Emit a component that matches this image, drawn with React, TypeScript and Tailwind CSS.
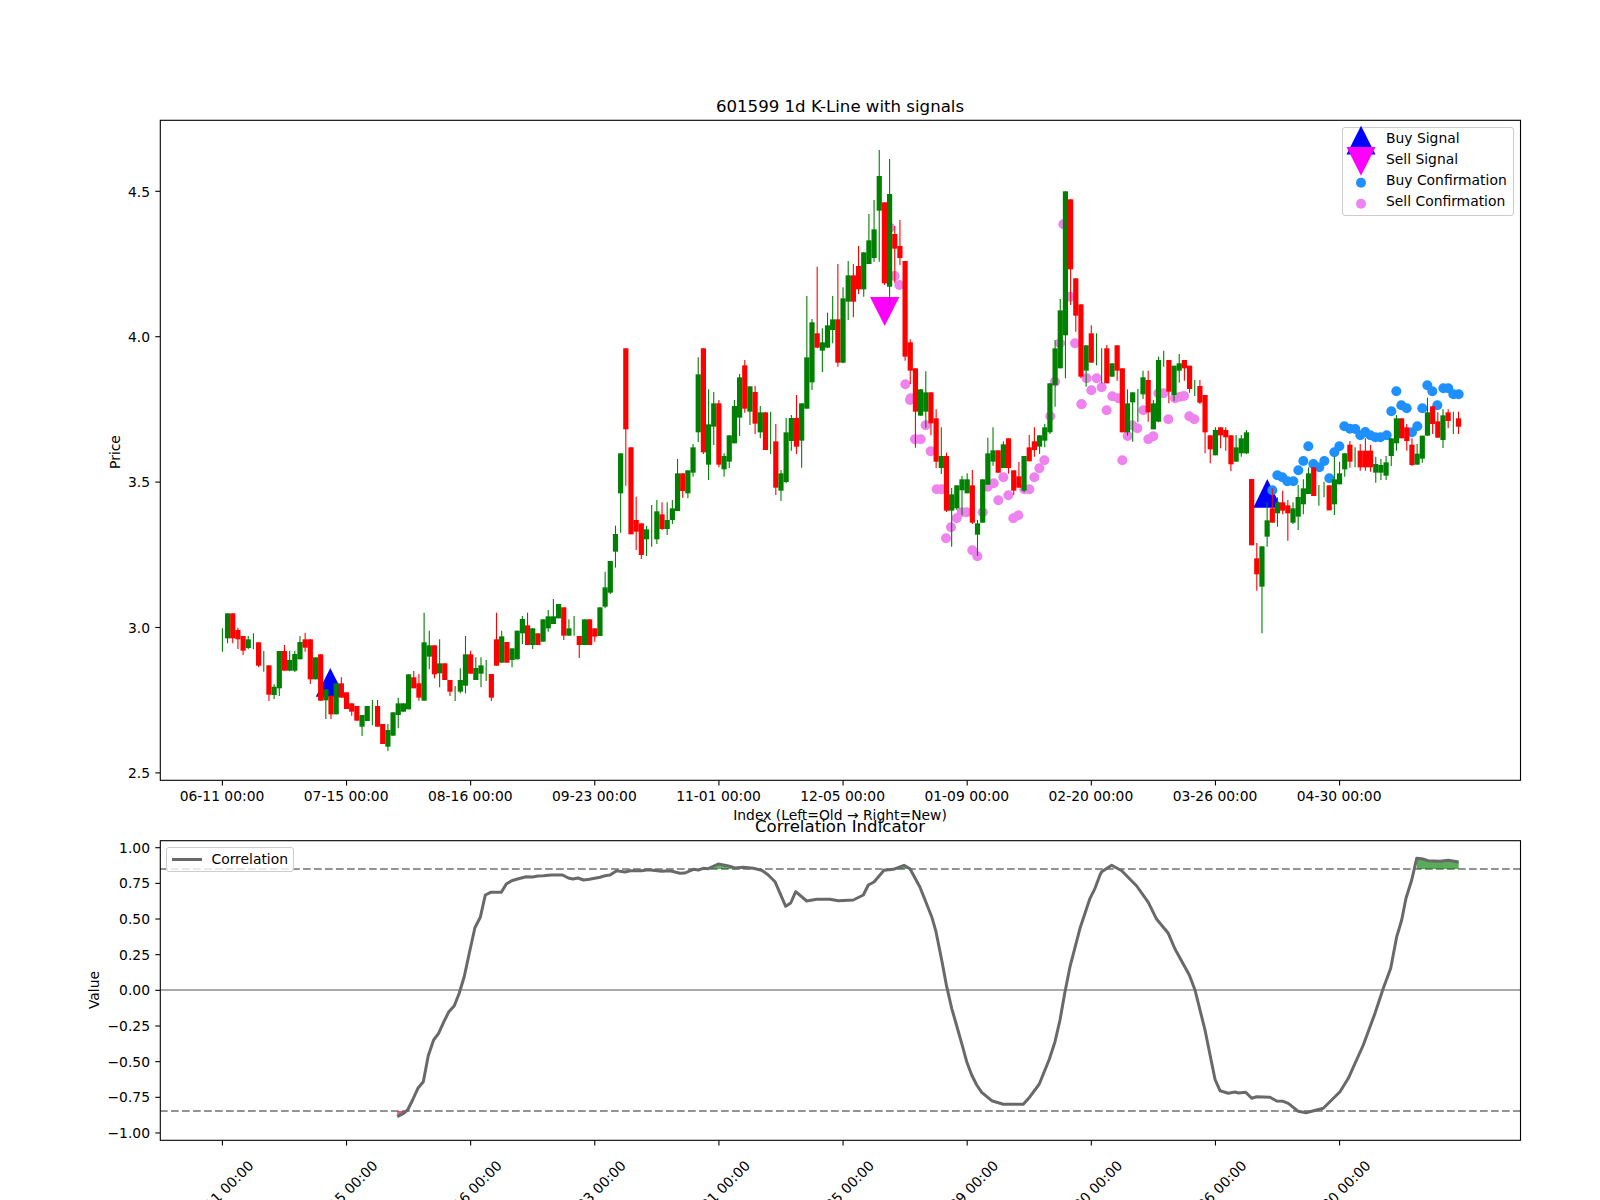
import React from 'react';

type Row = [string, number, number, number, number];

// candles were read off the picture in 3x crop pixels: colour, wick top, body top, body bottom, wick bottom
const seg = (oy: number, rows: Row[]) =>
  rows.map(([c, a, b, d, e]) => ({ c, wt: oy + a / 3, bt: oy + b / 3, bb: oy + d / 3, wb: oy + e / 3 }));

const candles = [
  ...seg(580, [
    ['g', 145, 178, 180, 215], ['g', 100, 100, 175, 190], ['r', 100, 100, 175, 190], ['r', 143, 150, 178, 207],
    ['r', 168, 168, 212, 225], ['g', 168, 178, 204, 208], ['g', 160, 182, 184, 208], ['r', 187, 187, 257, 262],
    ['g', 213, 245, 247, 275], ['r', 256, 256, 344, 363], ['g', 313, 320, 345, 357], ['g', 213, 213, 325, 348],
    ['r', 195, 213, 272, 272], ['g', 212, 240, 272, 274], ['g', 212, 222, 272, 276], ['g', 168, 186, 238, 238],
    ['r', 158, 178, 203, 215], ['r', 178, 178, 298, 312], ['g', 232, 232, 298, 298], ['r', 223, 223, 362, 362],
    ['g', 328, 328, 361, 417], ['r', 347, 347, 403, 417], ['g', 310, 310, 403, 403], ['r', 292, 310, 353, 353],
    ['r', 337, 337, 387, 387], ['r', 370, 370, 395, 407], ['r', 378, 378, 422, 422], ['g', 405, 405, 440, 468],
    ['g', 378, 378, 423, 423], ['g', 360, 396, 398, 436], ['r', 360, 378, 440, 440], ['r', 432, 432, 492, 492],
    ['g', 432, 450, 500, 513], ['g', 397, 397, 467, 467], ['g', 353, 370, 405, 445], ['g', 370, 370, 395, 395],
    ['g', 283, 283, 388, 388], ['r', 273, 292, 325, 325], ['r', 282, 310, 353, 362], ['g', 98, 187, 362, 362],
    ['g', 152, 196, 230, 268], ['r', 196, 196, 283, 295], ['g', 178, 250, 280, 322], ['r', 250, 250, 300, 300],
    ['r', 300, 300, 335, 348], ['g', 318, 340, 342, 363], ['g', 265, 300, 335, 340], ['g', 168, 223, 317, 340],
    ['r', 212, 223, 281, 281], ['g', 232, 264, 300, 300], ['g', 232, 256, 281, 322], ['g', 240, 270, 272, 303],
    ['r', 282, 282, 353, 363], ['r', 98, 178, 257, 257], ['g', 152, 169, 248, 248], ['r', 186, 186, 248, 248],
    ['g', 205, 205, 240, 262], ['g', 152, 152, 238, 238], ['g', 108, 117, 160, 192], ['r', 98, 136, 195, 195],
    ['g', 145, 145, 195, 207], ['r', 160, 160, 195, 195], ['g', 118, 118, 185, 185], ['g', 90, 109, 145, 155],
    ['g', 57, 109, 132, 132], ['g', 72, 72, 115, 115], ['r', 82, 82, 167, 180], ['g', 118, 145, 167, 167],
    ['g', 108, 140, 142, 167], ['r', 168, 168, 195, 234], ['g', 118, 118, 195, 195], ['r', 118, 118, 195, 195],
    ['r', 145, 145, 170, 185], ['g', 82, 82, 168, 168],
  ] as Row[]),
  ...seg(330, [
    ['g', 725, 772, 830, 835], ['g', 693, 693, 788, 792], ['g', 587, 612, 665, 713], ['g', 370, 370, 490, 608],
    ['r', 55, 55, 298, 467], ['r', 352, 352, 613, 613], ['r', 500, 570, 605, 660], ['r', 580, 580, 675, 687],
    ['g', 588, 598, 628, 678], ['g', 525, 585, 587, 650], ['g', 510, 544, 628, 642], ['r', 517, 553, 597, 600],
    ['g', 517, 570, 597, 615], ['g', 510, 535, 570, 582], ['g', 387, 430, 543, 543], ['r', 430, 430, 483, 503],
    ['g', 421, 421, 490, 505], ['g', 342, 352, 428, 440], ['g', 82, 133, 307, 336], ['r', 55, 55, 367, 372],
    ['g', 178, 283, 404, 450], ['g', 186, 220, 290, 345], ['r', 210, 220, 404, 412], ['g', 370, 378, 418, 440],
    ['g', 316, 316, 395, 414], ['g', 210, 228, 340, 340], ['g', 132, 142, 263, 318], ['r', 90, 106, 236, 248],
    ['g', 169, 169, 245, 285], ['r', 168, 186, 281, 312], ['g', 228, 247, 307, 325], ['r', 247, 247, 360, 360],
    ['g', 245, 300, 302, 372], ['r', 282, 334, 473, 495], ['g', 420, 430, 482, 513],
  ] as Row[]),
  ...seg(130, [
    ['g', 864, 907, 1056, 1060], ['g', 855, 864, 933, 962], ['r', 795, 864, 950, 972], ['g', 820, 820, 932, 1013],
    ['g', 498, 682, 836, 836], ['g', 567, 577, 757, 780], ['r', 410, 610, 653, 655], ['g', 595, 637, 662, 726],
    ['g', 548, 586, 653, 653], ['g', 498, 568, 600, 640], ['r', 402, 568, 698, 710], ['g', 472, 505, 698, 700],
    ['g', 393, 436, 515, 570], ['r', 402, 436, 515, 562], ['r', 348, 408, 478, 492], ['g', 367, 367, 478, 500],
    ['g', 252, 331, 402, 402], ['g', 210, 298, 384, 395], ['g', 60, 138, 242, 395], ['r', 217, 217, 460, 465],
    ['g', 87, 192, 470, 525], ['r', 288, 312, 356, 458], ['r', 270, 348, 384, 405], ['r', 393, 393, 680, 692],
    ['r', 628, 637, 722, 762],
  ] as Row[]),
  ...seg(400, [
    ['r', -95, -95, 35, 143], ['g', -32, -32, 47, 47], ['g', -86, -23, 35, 83], ['r', -23, -23, 70, 106],
    ['r', 28, 55, 185, 204], ['g', 82, 168, 204, 222], ['r', 158, 168, 332, 336], ['g', 264, 283, 332, 440],
    ['g', 256, 256, 325, 330], ['g', 228, 238, 271, 345], ['g', 220, 238, 280, 280], ['r', 210, 256, 368, 372],
    ['g', 360, 370, 404, 468], ['g', 238, 238, 368, 368], ['g', 113, 160, 254, 254], ['g', 82, 151, 185, 197],
    ['r', 151, 151, 218, 218], ['g', 124, 133, 204, 204], ['r', 115, 115, 204, 221], ['r', 211, 211, 272, 285],
    ['r', 186, 229, 263, 263], ['g', 168, 168, 272, 276], ['r', 105, 142, 184, 184], ['r', 82, 124, 150, 170],
    ['g', 106, 106, 140, 162], ['g', 72, 82, 122, 142], ['g', -50, -50, 97, 102],
  ] as Row[]),
  ...seg(130, [
    ['g', 630, 655, 765, 830], ['g', 507, 541, 715, 715], ['g', 184, 184, 616, 745], ['r', 208, 208, 418, 525],
    ['r', 445, 445, 557, 605], ['r', 523, 523, 740, 745], ['g', 646, 646, 722, 770], ['r', 586, 610, 698, 698],
    ['g', 610, 660, 662, 706], ['g', 655, 700, 702, 760], ['r', 645, 655, 760, 760], ['g', 700, 700, 740, 740],
    ['r', 646, 646, 722, 752], ['r', 715, 715, 907, 907], ['g', 778, 820, 907, 917],
  ] as Row[]),
  ...seg(340, [
    ['g', 157, 157, 187, 305], ['g', 147, 190, 192, 247], ['g', 92, 112, 163, 177], ['r', 92, 120, 217, 245],
    ['g', 180, 190, 268, 268], ['g', 50, 60, 245, 247], ['g', 32, 50, 52, 80], ['r', 60, 60, 155, 190],
    ['g', 77, 77, 165, 183], ['g', 42, 70, 92, 128], ['r', 60, 60, 85, 122], ['r', 77, 77, 147, 158],
    ['g', 120, 140, 142, 168], ['r', 120, 138, 188, 192], ['r', 165, 165, 277, 340], ['r', 286, 286, 328, 370],
    ['g', 262, 270, 346, 346], ['r', 262, 262, 286, 325], ['r', 262, 270, 292, 332], ['r', 286, 286, 373, 393],
  ] as Row[]),
  ...seg(360, [
    ['g', 225, 262, 305, 305], ['g', 225, 235, 280, 290], ['g', 210, 217, 280, 282], ['r', 357, 357, 556, 556],
    ['r', 549, 595, 643, 692], ['g', 559, 559, 680, 820], ['g', 427, 481, 530, 560], ['r', 385, 445, 488, 488],
    ['g', 412, 427, 460, 500], ['r', 392, 427, 452, 463], ['r', 420, 436, 460, 542], ['g', 427, 445, 488, 492],
    ['g', 375, 411, 470, 510], ['g', 358, 385, 433, 463], ['g', 322, 340, 402, 402], ['r', 322, 322, 408, 408],
    ['g', 375, 405, 407, 437], ['g', 365, 388, 390, 412], ['r', 376, 376, 451, 451], ['g', 290, 358, 433, 465],
    ['g', 305, 340, 373, 373], ['g', 280, 280, 328, 350], ['r', 243, 254, 305, 323], ['g', 262, 290, 292, 322],
    ['r', 252, 272, 322, 332], ['r', 235, 272, 322, 332], ['r', 255, 272, 322, 335], ['g', 290, 312, 338, 368],
    ['g', 297, 315, 338, 360], ['g', 288, 307, 347, 360], ['g', 235, 235, 288, 318], ['g', 165, 175, 250, 272],
    ['r', 175, 175, 235, 235], ['r', 192, 202, 243, 272], ['r', 235, 254, 315, 318], ['g', 252, 281, 314, 314],
    ['g', 227, 227, 296, 308], ['g', 113, 157, 227, 227], ['r', 139, 139, 192, 222], ['r', 157, 184, 233, 233],
    ['g', 148, 166, 240, 264], ['r', 148, 157, 183, 205], ['g', 155, 186, 188, 222], ['r', 155, 175, 200, 222],
  ] as Row[]),
];

const pts = (ox: number, oy: number, list: number[][], sx = 3) =>
  list.map(([x, y]) => [ox + x / sx, oy + y / 3]);

const pink = [
  ...pts(780, 130, [
    [330, 293], [344, 438], [358, 465], [376, 763], [392, 805], [850, 283], [870, 500], [840, 640], [885, 640],
    [825, 755], [920, 745], [950, 745], [934, 781], [965, 772], [905, 823], [997, 799], [1015, 805],
    [1135, 790], [1150, 790], [1185, 805], [1200, 800],
  ]),
  ...pts(900, 400, [
    [30, 0], [77, 76], [45, 118], [62, 118], [92, 154], [110, 268], [125, 268], [138, 415], [153, 382], [170, 355],
    [185, 337], [200, 337], [248, 337], [217, 451], [232, 469], [263, 260], [281, 250], [310, 232], [295, 301],
    [325, 286], [340, 355], [355, 346], [373, 268], [388, 268], [403, 232], [418, 205], [433, 181], [451, 49],
    [544, 13], [620, 31], [667, 181], [683, 108], [697, 76], [712, 85], [730, 31], [745, 118], [760, 109], [805, 58],
    [868, 49], [883, 58],
  ]),
  [1184, 396],
];

const blue = pts(1180, 360, [
  [277, 391], [292, 346], [307, 352], [322, 364], [340, 364], [355, 331], [370, 303], [385, 259], [400, 312],
  [418, 322], [433, 303], [448, 355], [463, 277], [478, 259], [493, 199], [510, 206], [526, 207], [541, 226],
  [556, 216], [571, 226], [586, 232], [601, 232], [620, 226], [634, 154], [649, 94], [664, 136], [680, 145],
  [696, 217], [712, 199], [727, 145], [742, 76], [757, 94], [772, 136], [790, 85], [805, 85], [820, 103], [836, 103],
]);

const corr = [
  ...pts(0, 780, [
    [1038, 1010], [1052, 1002], [1065, 990], [1078, 960], [1092, 925], [1106, 905], [1119, 828], [1133, 780], [1146, 760],
    [1160, 725], [1173, 695], [1187, 677], [1200, 640], [1213, 590], [1227, 515], [1241, 443], [1255, 412], [1268, 345],
    [1282, 337], [1310, 337], [1323, 312], [1337, 302], [1350, 298], [1375, 290], [1392, 291], [1405, 288], [1420, 287],
    [1440, 285], [1470, 285], [1485, 294], [1497, 297], [1510, 294], [1525, 300], [1540, 298],
  ], 2.613),
  ...pts(600, 780, [
    [0, 292], [15, 287], [30, 285], [50, 272], [75, 276], [90, 272], [125, 272], [145, 269], [185, 274], [210, 272],
    [240, 280], [255, 279], [280, 268], [295, 270], [310, 265], [325, 266], [355, 252], [385, 258], [405, 264], [430, 262],
    [460, 265], [485, 271], [505, 285], [525, 305], [557, 379], [572, 369], [587, 335], [620, 363], [650, 358], [690, 358],
    [715, 362], [760, 360], [790, 345], [805, 315], [822, 306], [852, 271], [880, 268], [912, 256], [930, 266], [960, 322],
    [995, 410], [1008, 455], [1025, 540], [1040, 620], [1055, 685], [1085, 790], [1100, 845], [1115, 885], [1130, 915],
    [1145, 937], [1175, 962], [1210, 973], [1270, 973], [1290, 950], [1318, 912], [1348, 838], [1365, 785], [1380, 720],
    [1395, 635], [1410, 560], [1440, 445], [1470, 355], [1485, 325],
  ]),
  ...pts(1100, 800, [
    [0, 225], [5, 215], [35, 196], [65, 212], [110, 258], [145, 307], [170, 358], [205, 400], [225, 447], [268, 525],
    [285, 570], [315, 690], [345, 838], [360, 872], [385, 880], [405, 876], [415, 879], [437, 877], [455, 895], [470, 890],
    [510, 892], [530, 903], [550, 904], [565, 910], [595, 934], [618, 938], [670, 925], [720, 875], [745, 835], [790, 735],
    [825, 640], [850, 565], [872, 505], [890, 410], [905, 360], [918, 295], [935, 240], [950, 175], [965, 176], [985, 182],
    [1020, 184], [1045, 181], [1076, 186],
  ]),
];

const line = (p: number[][]) => p.map(([x, y]) => `${x.toFixed(1)},${y.toFixed(1)}`).join(' ');

const xTicks = ['06-11', '07-15', '08-16', '09-23', '11-01', '12-05', '01-09', '02-20', '03-26', '04-30'].map((d, k) => ({
  x: 222.4 + 124.13 * k,
  label: `${d} 00:00`,
}));

const priceTicks = [['4.5', 191.3], ['4.0', 336.7], ['3.5', 482.1], ['3.0', 627.5], ['2.5', 772.9]] as [string, number][];
const corrTicks = ['1.00', '0.75', '0.50', '0.25', '0.00', '−0.25', '−0.50', '−0.75', '−1.00'].map(
  (t, k) => [t, 847.7 + 35.66 * k] as [string, number]
);

const PriceChart = () => (
  <svg viewBox="0 0 1600 815" className="block w-[1600px] h-[815px] overflow-visible">
    <text x="840" y="112" textAnchor="middle" className="text-[16.6px]">601599 1d K-Line with signals</text>

    <polygon points="330.3,668 315.8,696.7 344.8,696.7" fill="#0000ff" />
    <polygon points="1267.3,479 1253.3,507.7 1281.3,507.7" fill="#0000ff" />
    <polygon points="870,297 899.3,297 884.7,326" fill="#ff00ff" />
    {blue.map(([x, y], i) => <circle key={i} cx={x} cy={y} r="5" fill="#1e90ff" />)}
    {pink.map(([x, y], i) => <circle key={i} cx={x} cy={y} r="5" fill="#ee82ee" />)}

    {candles.map((k, i) => {
      const x = 222.4 + 5.172 * i;
      const col = k.c === 'g' ? '#008000' : '#ff0000';
      return (
        <g key={i}>
          <line x1={x} x2={x} y1={k.wt} y2={k.wb} stroke={col} strokeWidth="1.1" />
          {k.bb - k.bt > 1 && <rect x={x - 2.6} y={k.bt} width="5.2" height={k.bb - k.bt} fill={col} />}
        </g>
      );
    })}

    <rect x="160.3" y="120.3" width="1360.2" height="660" fill="none" stroke="#000" strokeWidth="1.1" />
    {priceTicks.map(([t, y]) => (
      <g key={t}>
        <line x1="155.3" x2="160" y1={y} y2={y} stroke="#000" strokeWidth="1.1" />
        <text x="150" y={y + 5.3} textAnchor="end" className="text-[13.89px]">{t}</text>
      </g>
    ))}
    {xTicks.map((t) => (
      <g key={t.x}>
        <line x1={t.x} x2={t.x} y1="780.5" y2="785.5" stroke="#000" strokeWidth="1.1" />
        <text x={t.x - 0.4} y="801" textAnchor="middle" className="text-[13.89px]">{t.label}</text>
      </g>
    ))}
    <text x="120" y="452" textAnchor="middle" transform="rotate(-90 120 452)" className="text-[13.89px]">Price</text>
    <text x="840" y="820" textAnchor="middle" className="text-[13.89px]">Index (Left=Old → Right=New)</text>
  </svg>
);

const CorrChart = () => (
  <svg viewBox="0 815 1600 385" className="block w-[1600px] h-[385px] overflow-visible">
    <text x="840" y="832" textAnchor="middle" className="text-[16.6px]">Correlation Indicator</text>

    <line x1="160" x2="1520" y1="990" y2="990" stroke="#aaaaaa" strokeWidth="2" />
    <line x1="160" x2="1520" y1="869" y2="869" stroke="#939393" strokeWidth="2" strokeDasharray="7.7 3.3" />
    <line x1="160" x2="1520" y1="1111" y2="1111" stroke="#939393" strokeWidth="2" strokeDasharray="7.7 3.3" />

    <polygon points="397.2,1111 407.7,1111 397.2,1116.7" fill="#dc143c" fillOpacity="0.7" />
    <polygon points="709,869 718.3,864 730,868 735,869" fill="#008000" fillOpacity="0.6" />
    <polygon points="896,869 904,865.3 910,869" fill="#008000" fillOpacity="0.6" />
    <polygon points="1416.7,869 1416.7,858.3 1421.7,858.7 1428.3,860.7 1440,861.3 1448.3,860.3 1458.7,862 1458.7,869" fill="#008000" fillOpacity="0.65" />
    <polyline points={line(corr)} fill="none" stroke="#696969" strokeWidth="3" strokeLinejoin="round" />

    <rect x="160.3" y="840.7" width="1360.2" height="299.6" fill="none" stroke="#000" strokeWidth="1.1" />
    {corrTicks.map(([t, y]) => (
      <g key={t}>
        <line x1="155.3" x2="160" y1={y} y2={y} stroke="#000" strokeWidth="1.1" />
        <text x="150" y={y + 5} textAnchor="end" className="text-[13.89px]">{t}</text>
      </g>
    ))}
    {xTicks.map((t) => (
      <g key={t.x}>
        <line x1={t.x} x2={t.x} y1="1140.5" y2="1145.5" stroke="#000" strokeWidth="1.1" />
        <text
          x={t.x - 1.5}
          y="1198"
          textAnchor="middle"
          transform={`rotate(-45 ${t.x - 1.5} 1193)`}
          className="text-[13.89px]"
        >
          {t.label}
        </text>
      </g>
    ))}
    <text x="99" y="990" textAnchor="middle" transform="rotate(-90 99 990)" className="text-[13.89px]">Value</text>
  </svg>
);

const LegendRow = ({ icon, label }: { icon: React.ReactNode; label: string }) => (
  <div className="flex items-center h-[21px]">
    <svg viewBox="0 0 30 21" className="w-[30px] h-[21px] overflow-visible shrink-0">{icon}</svg>
    <span className="ml-[9.7px] whitespace-nowrap">{label}</span>
  </div>
);

export default function App() {
  return (
    <div className="relative w-[1600px] h-[1200px] overflow-hidden bg-white text-black font-['DejaVu_Sans',sans-serif]">
      <section className="relative">
        <PriceChart />
        <div className="absolute left-[1342.3px] top-[127.3px] w-[171.4px] h-[88.4px] pl-[3px] rounded-[3px] border border-[#cccccc] bg-white/80 text-[13.89px]">
          <LegendRow icon={<polygon points="15,-2.3 0.5,26.4 29.5,26.4" fill="#0000ff" />} label="Buy Signal" />
          <LegendRow icon={<polygon points="0.5,-2 29.5,-2 15,26.7" fill="#ff00ff" />} label="Sell Signal" />
          <LegendRow icon={<circle cx="15" cy="12.7" r="5" fill="#1e90ff" />} label="Buy Confirmation" />
          <LegendRow icon={<circle cx="15" cy="12.7" r="5" fill="#ee82ee" />} label="Sell Confirmation" />
        </div>
      </section>
      <section className="relative">
        <CorrChart />
        <div className="absolute left-[166.3px] top-[32.3px] w-[127.7px] h-[25px] pl-[5px] flex items-center rounded-[3px] border border-[#cccccc] bg-white/80 text-[13.89px]">
          <span className="w-[30px] h-[2.8px] bg-[#696969] shrink-0" />
          <span className="ml-[9.2px] whitespace-nowrap">Correlation</span>
        </div>
      </section>
    </div>
  );
}
